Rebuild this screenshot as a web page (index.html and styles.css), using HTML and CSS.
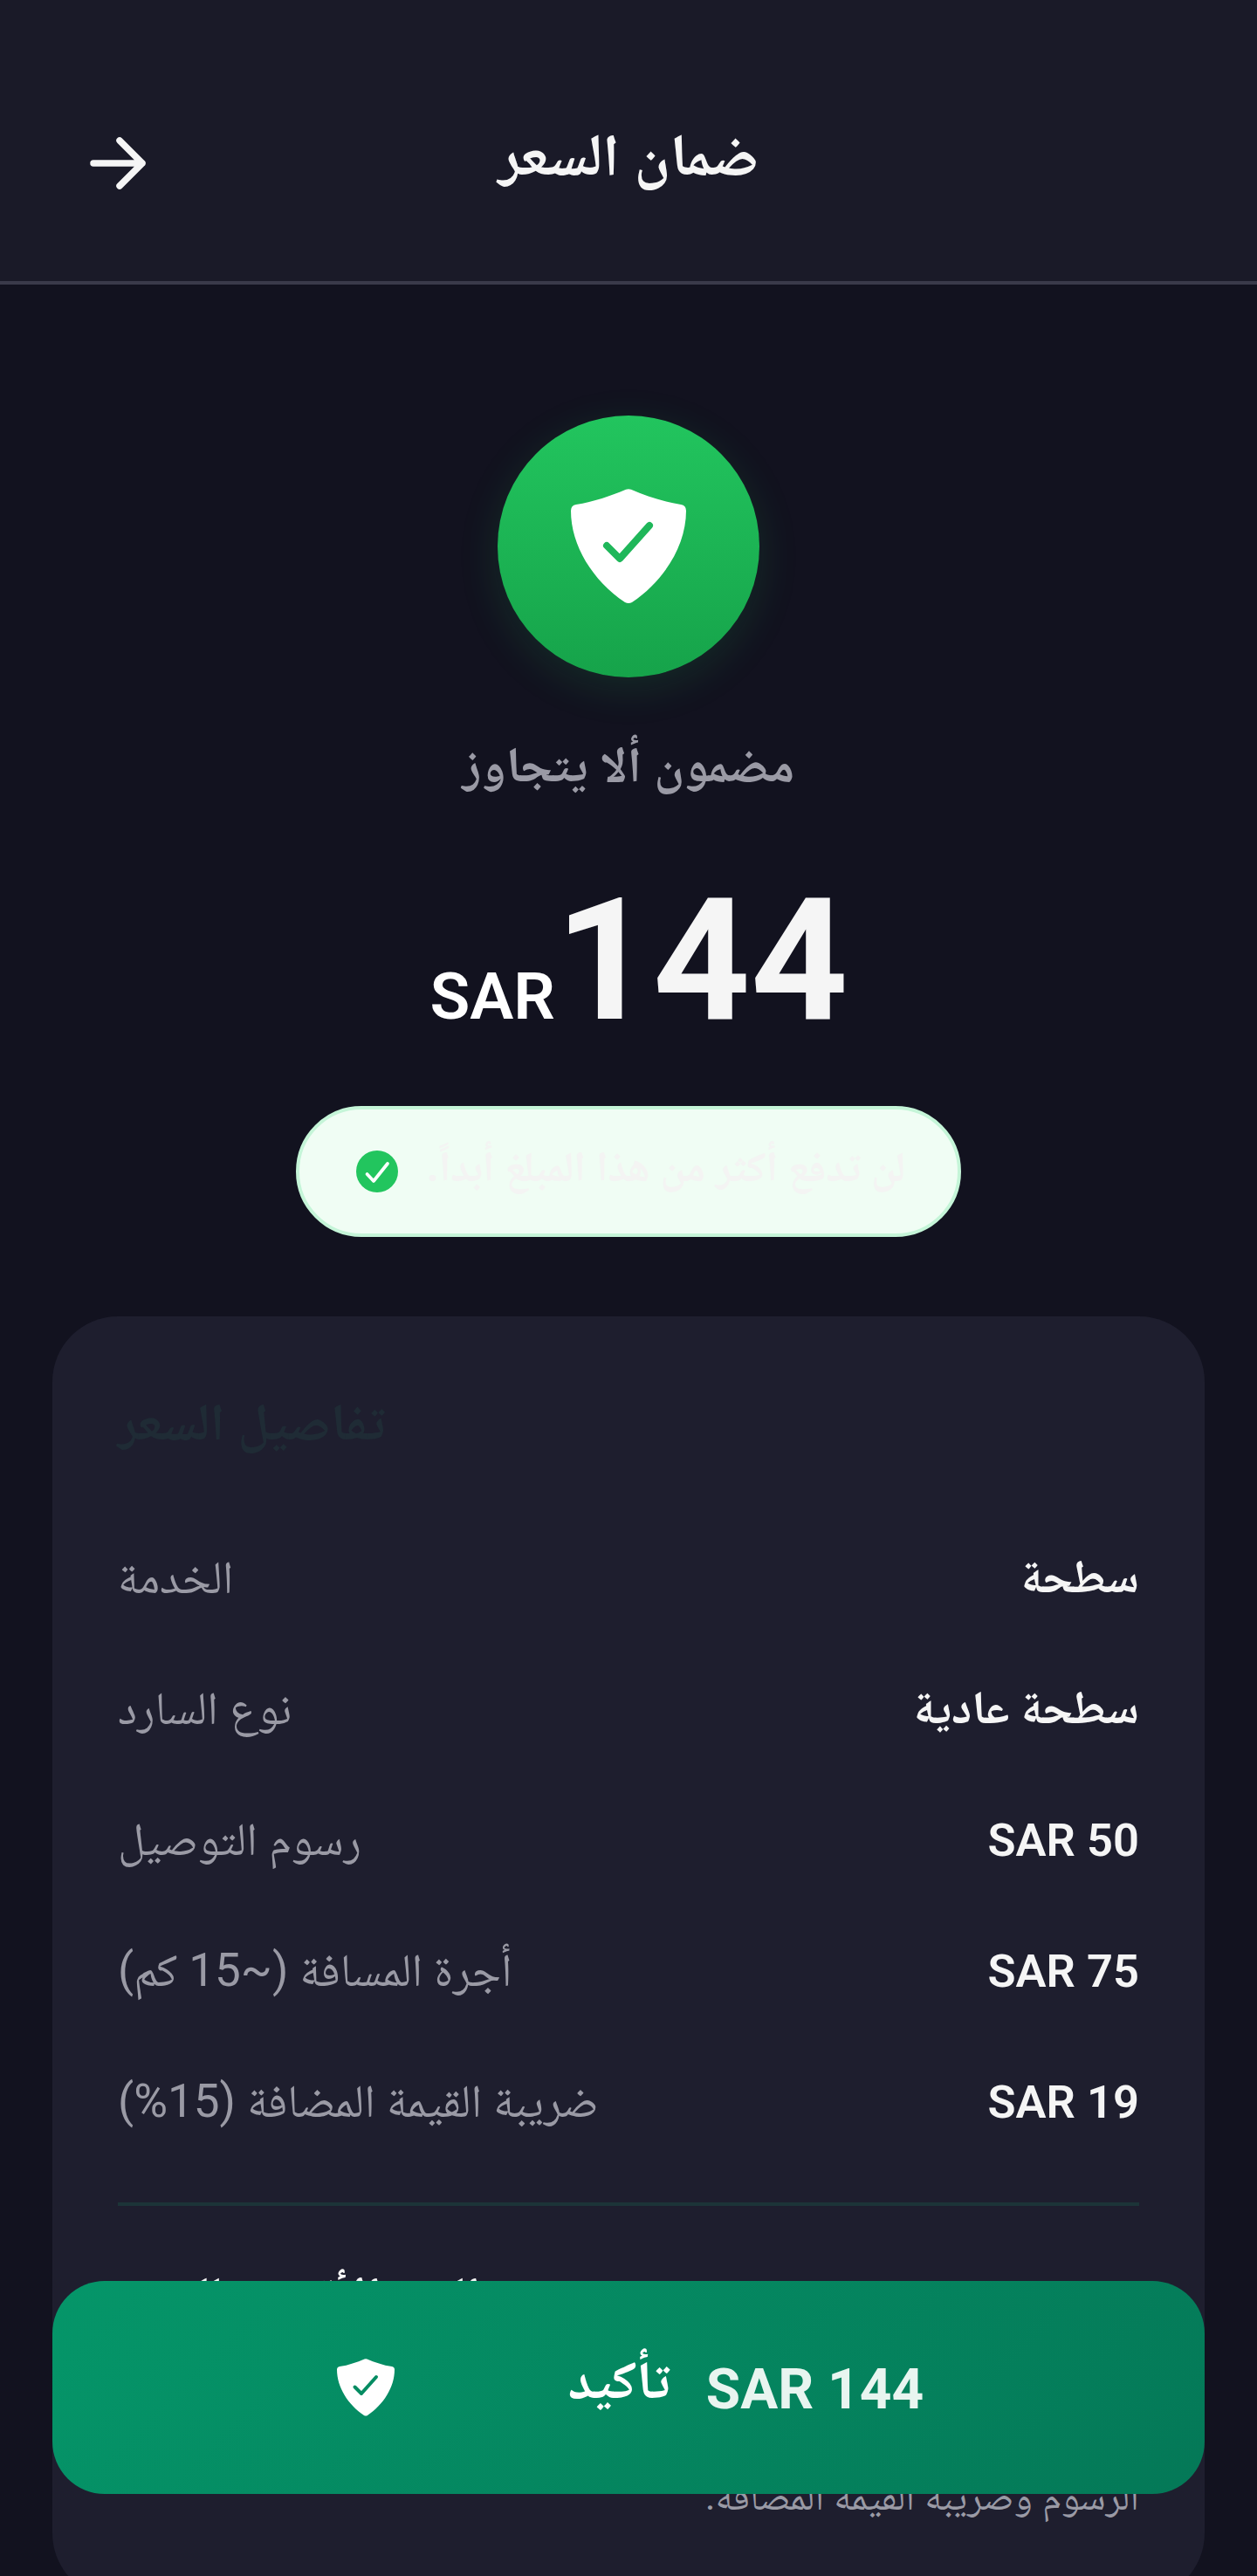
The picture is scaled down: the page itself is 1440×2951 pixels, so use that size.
FILE: index.html
```html
<!DOCTYPE html>
<html lang="ar">
<head>
<meta charset="utf-8">
<title>ضمان السعر</title>
<link rel="stylesheet" href="styles.css">
</head>
<body>
<div class="screen">
  <header class="topbar">
    <svg class="back" viewBox="0 0 72 72" fill="none" stroke="#f5f5f5" stroke-width="7.5" stroke-linecap="round" stroke-linejoin="round"><path d="M7 36H63M37 10L63 36L37 62"/></svg>
    <h1 class="title">ضمان السعر</h1>
  </header>
  <main class="content">
    <section class="hero">
      <div class="badge">
        <svg class="badge-icon" viewBox="0 0 132 132"><path fill="#fff" d="M63 .8Q66-.3 69 .8C86 8 106 15 126 18Q132 19 132 25C132 65 107 105 70 130Q66 132 62 130C25 105 0 65 0 25Q0 19 6 18C26 15 46 8 63 .8Z"/><path fill="none" stroke="#1fb75a" stroke-width="8" stroke-linecap="round" stroke-linejoin="round" d="M41 65L56 80L90 42"/></svg>
      </div>
      <p class="guarantee">مضمون ألا يتجاوز</p>
      <div class="amount"><span class="cur">SAR</span><span class="num">144</span></div>
      <div class="pill">
        <svg class="pill-check" viewBox="0 0 48 48"><circle cx="24" cy="24" r="24" fill="#22c55e"/><path fill="none" stroke="#fff" stroke-width="3.75" stroke-linecap="round" stroke-linejoin="round" d="M12.5 27L20 35L36 15"/></svg>
        <span class="pill-text" dir="rtl">لن تدفع أكثر من هذا المبلغ أبداً.</span>
      </div>
    </section>
    <section class="card">
      <h2 class="card-title">تفاصيل السعر</h2>
      <div class="rows">
        <div class="row"><span class="label">الخدمة</span><span class="value value-ar">سطحة</span></div>
        <div class="row"><span class="label">نوع السارد</span><span class="value value-ar">سطحة عادية</span></div>
        <div class="row"><span class="label">رسوم التوصيل</span><span class="value">SAR 50</span></div>
        <div class="row"><span class="label">أجرة المسافة (~15 كم)</span><span class="value">SAR 75</span></div>
        <div class="row"><span class="label">ضريبة القيمة المضافة (15%)</span><span class="value">SAR 19</span></div>
      </div>
      <div class="divider"></div>
      <div class="row total"><span class="total-label">الحد الأقصى للسعر</span><span class="total-value">SAR 144</span></div>
      <p class="note" dir="rtl">الرسوم وضريبة القيمة المضافة.</p>
    </section>
  </main>
  <button class="cta">
    <svg class="cta-icon" viewBox="0 0 132 132"><path fill="#fff" d="M63 .8Q66-.3 69 .8C86 8 106 15 126 18Q132 19 132 25C132 65 107 105 70 130Q66 132 62 130C25 105 0 65 0 25Q0 19 6 18C26 15 46 8 63 .8Z"/><path fill="none" stroke="#058c62" stroke-width="8" stroke-linecap="round" stroke-linejoin="round" d="M41 65L56 80L90 42"/></svg>
    <span class="cta-text">تأكيد</span>
    <span class="cta-price">SAR 144</span>
  </button>
</div>
</body>
</html>
```
FILE: styles.css
```css
* { box-sizing: border-box; margin: 0; padding: 0; }
html, body { background: #12121f; }
body { font-family: Roboto, "Noto Naskh Arabic", serif; }
.screen { position: relative; width: 1440px; height: 2951px; overflow: hidden; background: #12121f; }
.topbar { height: 326px; background: #1a1a28; border-bottom: 4px solid #3a3a4a; display: grid; grid-template-columns: 72px 1fr 72px; align-items: center; padding: 51px 100px 0; }
.back { width: 72px; height: 72px; }
.title { text-align: center; font-size: 68px; font-weight: 700; color: #f5f5f5; line-height: 90px; margin-bottom: 17px; }
.hero { display: flex; flex-direction: column; align-items: center; padding-top: 150px; }
.badge { width: 300px; height: 300px; border-radius: 50%; background: linear-gradient(180deg, #22c55e, #16a34a); box-shadow: 0 12px 48px rgba(34,197,94,.14); display: flex; align-items: center; justify-content: center; }
.badge-icon { width: 132px; height: 132px; }
.guarantee { margin-top: 61px; font-size: 57px; line-height: 80px; color: #9a9aa5; font-weight: 700; }
.amount { margin-top: 69px; padding-left: 24px; display: flex; align-items: baseline; color: #f5f5f5; }
.cur { font-size: 75px; font-weight: 600; color: #fff; }
.num { font-size: 195px; font-weight: 700; line-height: 230px; }
.pill { margin-top: 51px; height: 150px; border: 4px solid #c5f5d8; background: #f0fdf4; border-radius: 75px; display: flex; align-items: center; gap: 33px; padding: 0 60px 0 65px; }
.pill-check { width: 48px; height: 48px; flex: none; }
.pill-text { font-size: 48px; color: #f4f4f3; font-weight: 700; white-space: nowrap; }
.card { margin: 91px 60px 0; background: #1e1e2e; border-radius: 75px; padding: 77px 75px 82px; }
.card-title { font-size: 60px; font-weight: 700; color: #1f2b35; line-height: 90px; }
.rows { margin-top: 58px; display: flex; flex-direction: column; }
.row { display: flex; justify-content: space-between; align-items: center; height: 150px; }
.label { font-size: 53px; color: #9a9aa5; padding-top: 10px; }
.value { font-size: 52.5px; font-weight: 600; color: #f5f5f5; }
.value-ar { font-size: 53.5px; font-weight: 700; padding-top: 8px; }
.divider { height: 4px; background: #1c3438; margin-top: 40px; }
.total { margin-top: 36px; }
.total-label { font-size: 60px; font-weight: 700; color: #f5f5f5; }
.total-value { font-size: 72px; font-weight: 700; color: #22c55e; padding-top: 6px; }
.note { font-size: 45px; line-height: 70px; color: #9a9aa5; margin-top: 112px; }
.cta { position: absolute; left: 60px; top: 2613px; width: 1320px; height: 244px; border: 0; border-radius: 60px; background: linear-gradient(135deg, #059669, #047857); display: flex; align-items: center; justify-content: center; font-family: inherit; color: #fff; padding-left: 4px; }
.cta-icon { width: 66px; height: 66px; flex: none; margin-right: 199px; }
.cta-text { font-size: 61px; font-weight: 700; margin-right: 41px; }
.cta-price { font-size: 64px; font-weight: 700; color: #e8f5f0; padding-top: 5px; }
```
